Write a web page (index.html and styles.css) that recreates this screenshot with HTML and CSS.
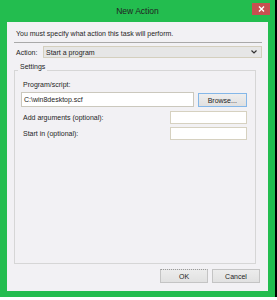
FILE: index.html
```html
<!DOCTYPE html>
<html lang="en">
<head>
    <meta charset="UTF-8">
    <meta name="viewport" content="width=device-width, initial-scale=1.0">
    <title>New Action</title>
    <link rel="stylesheet" href="styles.css">
</head>
<body>
    <div class="window">
        <div class="titlebar">
            <span></span>
            <span class="title">New Action</span>
            <span class="close">
                <svg width="7" height="6" viewBox="0 0 7 6"><path d="M1 0.5 L6 5.5 M6 0.5 L1 5.5" stroke="#fff" stroke-width="1.4" fill="none"/></svg>
            </span>
        </div>

        <div class="client">
            <p class="intro">You must specify what action this task will perform.</p>
            <div class="sep"></div>

            <div class="action-row">
                <span class="action-label">Action:</span>
                <div class="combo">
                    <span>Start a program</span>
                    <svg width="6" height="4" viewBox="0 0 6 4"><path d="M0.5 0.5 L3 3 L5.5 0.5" stroke="#333" stroke-width="1.2" fill="none"/></svg>
                </div>
            </div>

            <fieldset class="settings">
                <legend>Settings</legend>
                <div class="field-label">Program/script:</div>
                <div class="program-row">
                    <div class="textbox wide">C:\win8desktop.scf</div>
                    <button class="browse">Browse...</button>
                </div>
                <div class="opt-row first">
                    <span class="field-label">Add arguments (optional):</span>
                    <div class="textbox small"></div>
                </div>
                <div class="opt-row">
                    <span class="field-label">Start in (optional):</span>
                    <div class="textbox small"></div>
                </div>
            </fieldset>

            <div class="buttons">
                <button class="btn ok">OK</button>
                <button class="btn">Cancel</button>
            </div>
        </div>
    </div>
</body>
</html>
```

FILE: styles.css
```css
body {
    margin: 0;
    background: #fff;
    font-family: "Liberation Sans", Arial, sans-serif;
    font-size: 7px;
    color: #1e1e1e;
}

.window {
    width: 275px;
    height: 297px;
    background: #23bd4f;
    box-shadow: 2px 0 0 #000;
    display: flex;
    flex-direction: column;
    box-sizing: border-box;
    padding: 0 7px 6px 7px;
}

.titlebar {
    height: 22px;
    display: grid;
    grid-template-columns: 1fr auto 1fr;
    align-items: start;
    margin: 0 -7px;
}

.title {
    font-size: 8.5px;
    line-height: 22px;
    color: #222;
}

.close {
    justify-self: end;
    margin: 3px 5px 0 0;
    width: 18px;
    height: 12px;
    background: #c75050;
    display: flex;
    align-items: center;
    justify-content: center;
}

.close svg {
    display: block;
}

.client {
    flex: 1;
    background: #f2f1f4;
    display: flex;
    flex-direction: column;
    padding: 7px 8px 8px 0;
}

.intro {
    margin: 0 0 0 9px;
    line-height: 9px;
}

.sep {
    margin: 4px -2px 0 7px;
    height: 1px;
    background: #a9a9a9;
}

.action-row {
    display: flex;
    align-items: center;
    margin-top: 3px;
    margin-right: -2px;
}

.action-label {
    width: 27px;
    padding-left: 9px;
}

.combo {
    flex: 1;
    height: 12px;
    box-sizing: border-box;
    border: 1px solid #d4cfbd;
    background: #e6e6e6;
    display: flex;
    align-items: center;
    justify-content: space-between;
    padding: 0 4px 0 2px;
}

.settings {
    flex: 1;
    margin: 5px 4px 0 7px;
    padding: 0 8px 0 6px;
    border: 1px solid #d6d6d6;
    min-width: 0;
}

.settings legend {
    line-height: 8px;
    padding: 0 2px 7px 2px;
    margin-left: -3px;
}

.field-label {
    line-height: 9px;
    padding-left: 2px;
}

.settings > .field-label {
    margin-top: 2px;
}

.program-row {
    display: flex;
    align-items: flex-end;
    gap: 4px;
    margin-top: 3px;
}

.textbox {
    box-sizing: border-box;
    border: 1px solid #d6d1c0;
    background: #fff;
    line-height: 13px;
    padding-left: 2px;
}

.textbox.wide {
    width: 178px;
    height: 15px;
    border-color: #cbc8bd;
}

.browse {
    width: 51px;
    height: 14px;
    border: 1px solid #84b7e8;
    background: linear-gradient(#eeeeee, #e0e0e0);
    font-family: inherit;
    font-size: 7px;
    color: #1e1e1e;
    padding: 0;
}

.opt-row {
    display: flex;
    align-items: center;
    justify-content: space-between;
    margin-top: 3px;
}

.opt-row.first {
    margin-top: 4px;
}

.textbox.small {
    width: 77px;
    height: 13px;
}

.buttons {
    display: flex;
    justify-content: flex-end;
    gap: 4px;
    margin-top: 5px;
}

.btn {
    width: 48px;
    height: 14px;
    border: 1px solid #c4c4c4;
    background: linear-gradient(#ececec, #e1e1e1);
    font-family: inherit;
    font-size: 7px;
    color: #1e1e1e;
    padding: 0;
}

.btn.ok {
    border-top: 1px dotted #9a9a9a;
}
```
